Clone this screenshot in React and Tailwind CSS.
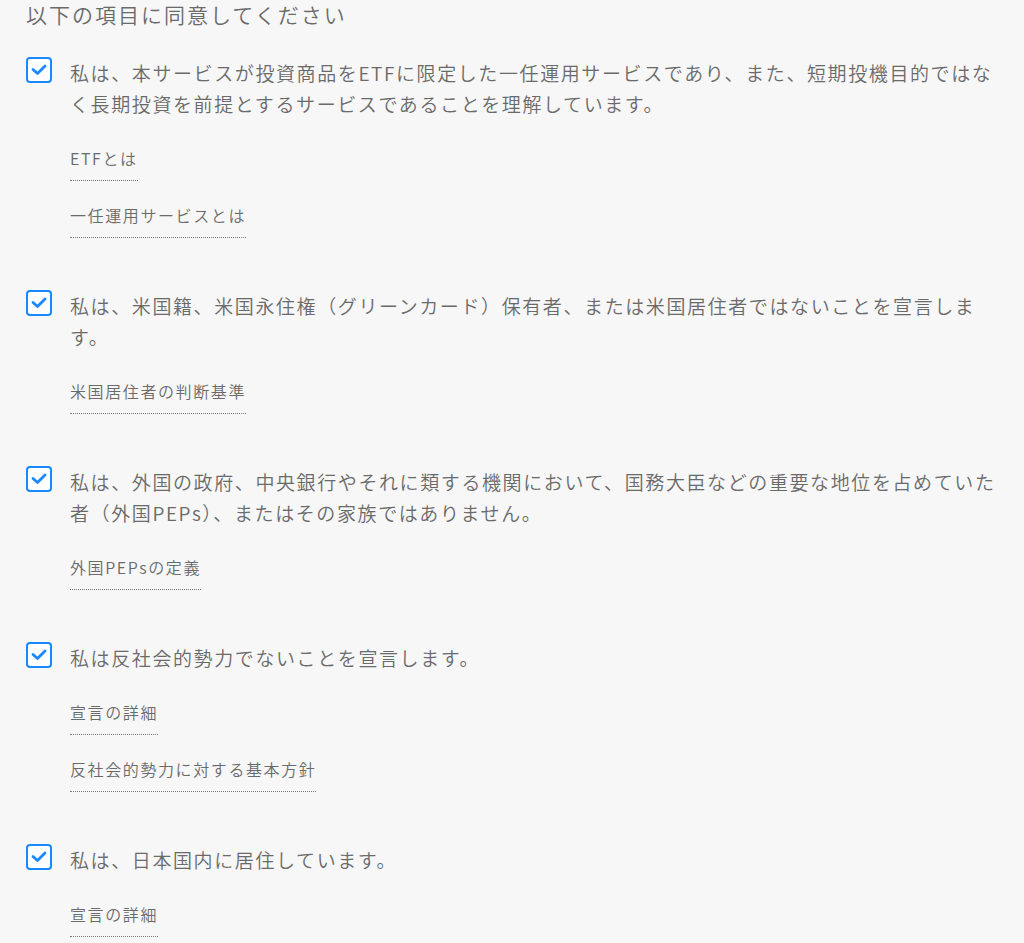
import React from 'react';

const items = [
    {
        text: '私は、本サービスが投資商品をETFに限定した一任運用サービスであり、また、短期投機目的ではなく長期投資を前提とするサービスであることを理解しています。',
        links: ['ETFとは', '一任運用サービスとは'],
    },
    {
        text: '私は、米国籍、米国永住権（グリーンカード）保有者、または米国居住者ではないことを宣言します。',
        links: ['米国居住者の判断基準'],
    },
    {
        text: '私は、外国の政府、中央銀行やそれに類する機関において、国務大臣などの重要な地位を占めていた者（外国PEPs）、またはその家族ではありません。',
        links: ['外国PEPsの定義'],
    },
    {
        text: '私は反社会的勢力でないことを宣言します。',
        links: ['宣言の詳細', '反社会的勢力に対する基本方針'],
    },
    {
        text: '私は、日本国内に居住しています。',
        links: ['宣言の詳細'],
    },
];

const Checkbox = () => (
    <span className="shrink-0 w-[26px] h-[26px] rounded-[4px] border-2 border-[#1a88ff] bg-white flex items-center justify-center">
        <svg width="16" height="12" viewBox="0 0 16 12" fill="none">
            <polyline points="2,5.5 6.5,9.5 14,2" stroke="#1a88ff" strokeWidth="2.8" strokeLinecap="round" strokeLinejoin="round" />
        </svg>
    </span>
);

const App = () => {
    return (
        <div
            className="min-h-[943px] bg-[#f7f7f7] pl-[26px] pr-[18px] text-[#6a6a6a] font-[350] overflow-hidden"
            style={{ fontFamily: '"Noto Sans CJK JP", "Noto Sans", sans-serif' }}
        >
            {/* heading */}
            <h2 className="text-[21px] leading-[29px] tracking-[2px]">以下の項目に同意してください</h2>

            <div className="mt-[28px] flex flex-col gap-[52px]">
                {items.map((item, i) => (
                    <div key={i}>
                        <label className="flex gap-[18px] items-start">
                            <Checkbox />
                            <p className="text-[19px] leading-[31px] tracking-[1.6px] w-[936px]">{item.text}</p>
                        </label>
                        {/* related links */}
                        <div className="mt-[28px] pl-[44px] flex flex-col items-start gap-[23px]">
                            {item.links.map((l) => (
                                <a
                                    key={l}
                                    href="#"
                                    className="block text-[16px] leading-[22px] tracking-[1.6px] pb-[11px] border-b border-dotted border-[#777]"
                                >
                                    {l}
                                </a>
                            ))}
                        </div>
                    </div>
                ))}
            </div>
        </div>
    );
};

export default App;
